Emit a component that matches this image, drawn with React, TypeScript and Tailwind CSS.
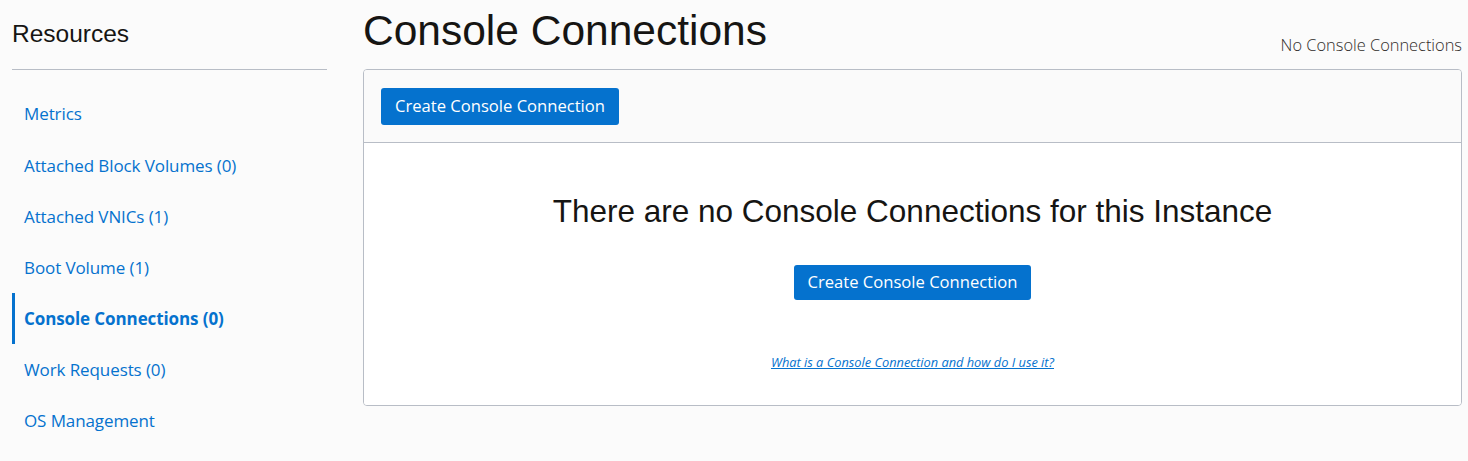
import React from "react";

const navItems = [
  { label: "Metrics" },
  { label: "Attached Block Volumes (0)" },
  { label: "Attached VNICs (1)" },
  { label: "Boot Volume (1)" },
  { label: "Console Connections (0)", active: true },
  { label: "Work Requests (0)" },
  { label: "OS Management" },
];

const body = { fontFamily: '"Open Sans", "Noto Sans", sans-serif' };
const heading = { fontFamily: '"Liberation Sans", Arial, sans-serif' };

export default function App() {
  return (
    <div className="w-[1468px] h-[461px] bg-[#fbfbfb] flex overflow-hidden" style={body}>
      {/* Resources sidebar */}
      <aside className="w-[315px] ml-[12px] shrink-0">
        <h2 className="text-[24.5px] leading-none text-[#161513] pt-[22px] pb-[22px]" style={heading}>
          Resources
        </h2>
        <div className="border-t border-[#b8bdc6]" />
        <ul className="mt-[19px]">
          {navItems.map((item) => (
            <li
              key={item.label}
              className={`h-[51.2px] flex items-center pl-[9px] border-l-[3px] ${
                item.active ? "border-[#0572ce] font-bold" : "border-transparent"
              }`}
            >
              <a className="text-[17px] text-[#0572ce] tracking-[-0.1px] cursor-pointer">{item.label}</a>
            </li>
          ))}
        </ul>
      </aside>

      {/* Main content */}
      <main className="ml-[36px] w-[1099px] shrink-0">
        <div className="flex items-end justify-between h-[69px] pb-[11px]">
          <h1 className="text-[42.5px] leading-none text-[#161513] mb-[6px]" style={heading}>
            Console Connections
          </h1>
          <span className="text-[16.4px] text-[#312d2a] font-light">No Console Connections</span>
        </div>

        <div className="border border-[#b8bdc6] rounded-[4px] overflow-hidden">
          <div className="bg-[#fafafa] border-b border-[#b8bdc6] h-[73px] px-[17px] flex items-center">
            <button className="bg-[#0572ce] text-white text-[16.6px] h-[37px] px-[14px] rounded-[3px]">
              Create Console Connection
            </button>
          </div>
          <div className="bg-white h-[262px] flex flex-col items-center">
            <h3 className="mt-[53px] text-[31.5px] leading-none text-[#161513]" style={heading}>
              There are no Console Connections for this Instance
            </h3>
            <button className="mt-[37px] bg-[#0572ce] text-white text-[16.6px] h-[35px] px-[14px] rounded-[3px]">
              Create Console Connection
            </button>
            <a className="mt-[53px] text-[12.8px] italic underline text-[#0572ce] cursor-pointer">
              What is a Console Connection and how do I use it?
            </a>
          </div>
        </div>
      </main>
    </div>
  );
}
